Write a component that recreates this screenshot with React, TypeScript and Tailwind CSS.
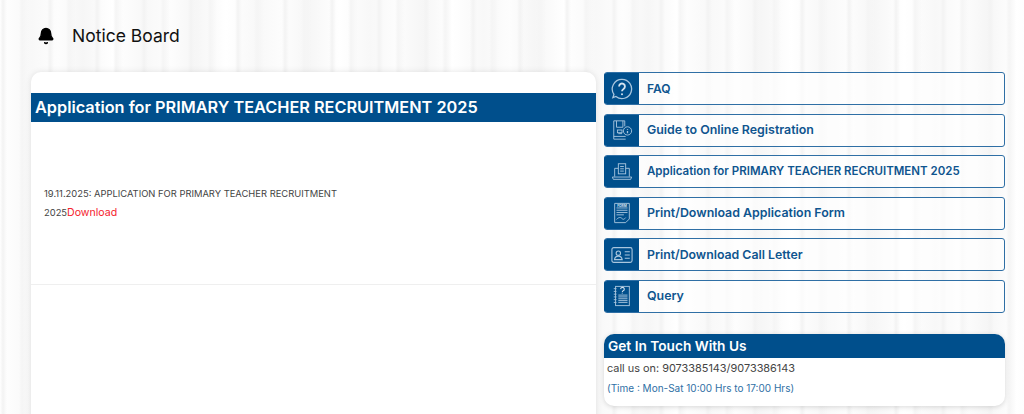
import React from 'react';
import { Bell } from 'lucide-react';

const iconProps = {
  width: 22,
  height: 22,
  viewBox: '0 0 24 24',
  fill: 'none',
  stroke: '#a9c6de',
  strokeWidth: 1,
};

const FaqIcon = () => (
  <svg {...iconProps} strokeWidth={1.4}>
    <path d="M12 1.5a10.5 10.5 0 1 1-6.6 18.7L2 21.5l1.2-3.6A10.5 10.5 0 0 1 12 1.5z" />
    <path d="M8.8 9.2a3.2 3.2 0 1 1 4.9 2.7c-1.1.7-1.7 1.3-1.7 2.6" strokeWidth={2} stroke="#d5e3ef" />
    <circle cx="12" cy="17.6" r="1.1" fill="#d5e3ef" stroke="none" />
  </svg>
);

const GuideIcon = () => (
  <svg {...iconProps}>
    <path d="M15 8V2H3v20h13" />
    <path d="M3 19h13M6 2v7h7V2M8 16h4" />
    <rect x="7" y="12" width="5" height="3" />
    <circle cx="18" cy="13" r="4.5" />
    <path d="M18 11v.8M18 13v2.5" strokeWidth={1.4} />
  </svg>
);

const ApplicationIcon = () => (
  <svg {...iconProps}>
    <path d="M4 17V8h4M20 17V8h-4" />
    <path d="M1.5 17.5h21l-1 2.5h-19z" />
    <rect x="8" y="3" width="8" height="11" />
    <path d="M10 6h4M10 8.5h4M10 11h4" />
  </svg>
);

const FormIcon = () => (
  <svg {...iconProps}>
    <path d="M4 1.5h16v17l-4 4H4z" />
    <path d="M6 6.5h12M6 9h12M6 11.5h12M6 14h8" />
    <path d="M6 19c2-2 4-3 6-1s3 0 4-1" />
    <text x="12" y="5.2" fontSize="3.6" fontFamily="Inter, sans-serif" fontWeight="700" textAnchor="middle" fill="#d5e3ef" stroke="none">FORM</text>
  </svg>
);

const CardIcon = () => (
  <svg {...iconProps} strokeWidth={1.2}>
    <rect x="1" y="4" width="22" height="16" rx="2" />
    <circle cx="8" cy="10" r="2.4" />
    <path d="M3.8 17c.4-2.6 2-3.8 4.2-3.8s3.8 1.2 4.2 3.8z" />
    <path d="M15 8.5h5.5M15 12h5.5M15 15.5h5.5" />
  </svg>
);

const QueryIcon = () => (
  <svg {...iconProps}>
    <rect x="5" y="1.5" width="15" height="21" />
    <path d="M3 4h3M3 7h3M3 10h3M3 13h3M3 16h3M3 19h3" />
    <path d="M8 11h10M8 13h10M8 15h10M8 17h10M8 19h10" />
    <path d="M10.5 4.5a2 2 0 1 1 2.8 1.9c-.7.3-1 .7-1 1.4M12.3 9v.5" strokeWidth={1.2} stroke="#d5e3ef" />
  </svg>
);

const links = [
  { label: 'FAQ', size: 'text-[12px]', icon: <FaqIcon /> },
  { label: 'Guide to Online Registration', size: 'text-[12.4px]', icon: <GuideIcon /> },
  // mostly capitals, so it runs wider than the other rows
  { label: 'Application for PRIMARY TEACHER RECRUITMENT 2025', size: 'text-[11.5px]', icon: <ApplicationIcon /> },
  { label: 'Print/Download Application Form', size: 'text-[12.4px]', icon: <FormIcon /> },
  { label: 'Print/Download Call Letter', size: 'text-[12.3px]', icon: <CardIcon /> },
  { label: 'Query', size: 'text-[12.4px]', icon: <QueryIcon /> },
];

export default function App() {
  return (
    <div className="h-[414px] overflow-hidden bg-[#fafafa] bg-[repeating-linear-gradient(90deg,transparent_0px,#f3f3f3_3px,transparent_7px,transparent_19px,#f5f5f5_22px,transparent_29px,transparent_47px),repeating-linear-gradient(90deg,#ffffff_0px,#f8f8f8_31px,#fdfdfd_58px,#f6f6f6_83px,#ffffff_113px)] font-['Inter',sans-serif]">
      <div className="flex items-center h-[72px] pl-[37px] pb-[1px]">
        <Bell className="w-[18px] h-[18px] text-black" fill="currentColor" strokeWidth={2} />
        <h2 className="ml-[17px] text-[17.5px] leading-none text-[#111]">Notice Board</h2>
      </div>

      <div className="flex items-start gap-2 pl-[31px]">
        {/* Notice card */}
        <div className="w-[565px] h-[360px] shrink-0 bg-white rounded-t-[10px] shadow-[0_0_6px_rgba(0,0,0,0.1)] pt-[21px]">
          <div className="h-[29px] bg-[#004f8c] px-1 flex items-center text-white text-[16.3px] font-semibold whitespace-nowrap">
            Application for PRIMARY TEACHER RECRUITMENT 2025
          </div>
          <div className="h-[163px] pt-[62px] pl-[13px] border-b border-[#efefef] text-[9.4px] leading-[19px] text-[#444]">
            <div>19.11.2025: APPLICATION FOR PRIMARY TEACHER RECRUITMENT</div>
            <div>
              2025<span className="text-[10.6px] text-[#f5222d]">Download</span>
            </div>
          </div>
        </div>

        {/* Quick links + contact */}
        <div className="w-[401px] shrink-0">
          <div className="flex flex-col gap-[8.6px]">
            {links.map(link => (
              <div key={link.label} className="h-[33px] flex items-center rounded-[3px] border border-[#2f6fa5] bg-white/60">
                <div className="w-[35px] h-full -ml-px bg-[#004f8c] rounded-l-[3px] flex items-center justify-center shrink-0">
                  {link.icon}
                </div>
                <span className={`ml-[8px] font-semibold text-[#0f558f] whitespace-nowrap ${link.size}`}>{link.label}</span>
              </div>
            ))}
          </div>

          <div className="mt-[21px] h-[72px] bg-white rounded-[10px] shadow-[0_1px_5px_rgba(0,0,0,0.15)] overflow-hidden">
            <div className="h-[24px] bg-[#004f8c] px-1 flex items-center text-white text-[13.7px] font-semibold">
              Get In Touch With Us
            </div>
            <p className="pl-[3px] pt-[2px] text-[10.9px] leading-[16px] text-[#444]">call us on: 9073385143/9073386143</p>
            <p className="pl-[3px] pt-[4px] text-[10px] leading-[16px] text-[#2f6fa5]">(Time : Mon-Sat 10:00 Hrs to 17:00 Hrs)</p>
          </div>
        </div>
      </div>
    </div>
  );
}
